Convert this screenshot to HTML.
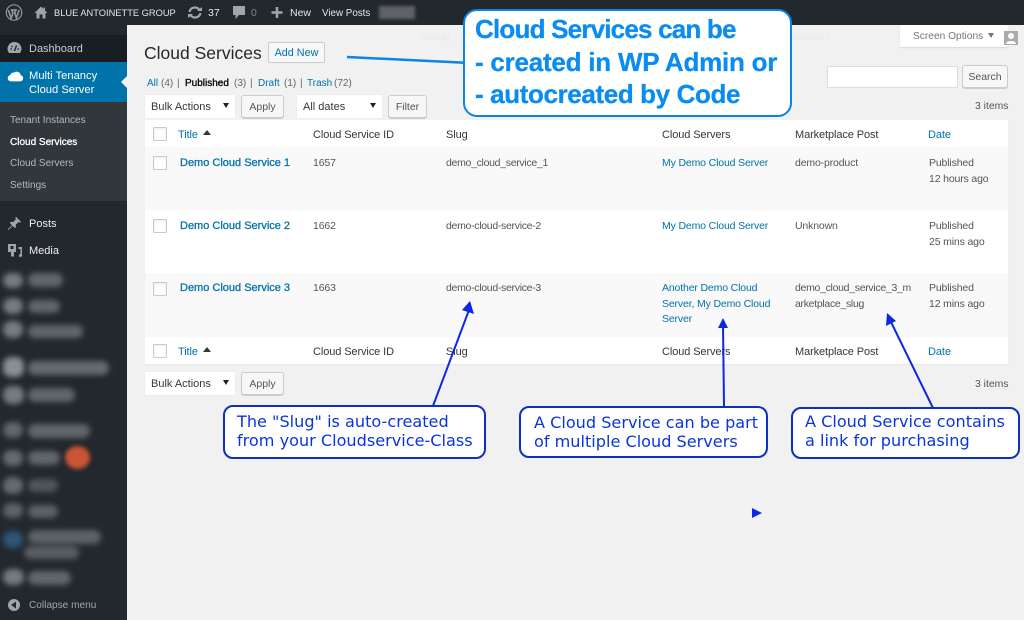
<!DOCTYPE html>
<html><head><meta charset="utf-8">
<style>
html,body{margin:0;padding:0}
body{width:1024px;height:620px;overflow:hidden;position:relative;background:#f1f1f1;font-family:"Liberation Sans",sans-serif;font-size:11.5px;color:#555}
.a,.t{position:absolute}
.t{white-space:nowrap;line-height:16px}
a{color:#0073aa;text-decoration:none}
.m{color:#eee;font-size:11px}
.s{color:#b4b9be;font-size:10px}
.btn{position:absolute;box-sizing:border-box;background:#f7f7f7;border:1px solid #ccc;border-radius:3px;box-shadow:0 1px 0 #ccc;color:#555;font-size:10.5px;text-align:center;line-height:23px;height:23px}
.sel{position:absolute;box-sizing:border-box;background:#fff;height:23px;box-shadow:0 0 1px #ddd;color:#32373c;line-height:24px;padding-left:6px;font-size:11px}
.sel:after{content:"";position:absolute;right:6px;top:8px;border:3px solid transparent;border-top:5px solid #222;border-bottom:0}
.cb{position:absolute;box-sizing:border-box;left:153px;width:14px;height:14px;background:#fff;border:1px solid #c8cbce;border-radius:1px;box-shadow:inset 0 1px 2px rgba(0,0,0,.08)}
.row{position:absolute;left:145px;width:863px}
.h{font-size:11px;color:#32373c;letter-spacing:-.1px}
.h a{color:#0073aa}
.ti{font-size:11px;color:#0073aa;-webkit-text-stroke:.3px #0073aa}
.c{font-size:10.5px;letter-spacing:-.15px}
.g{letter-spacing:-.3px}
.d{line-height:15.5px!important;margin-top:1px}
.co{position:absolute;box-sizing:border-box;background:#fff;border:2px solid #0f2fc0;border-radius:10px;font-family:"DejaVu Sans",sans-serif;font-size:16.1px;line-height:19px;color:#0a34e0;white-space:nowrap}
.bl{position:absolute;background:#767b80;border-radius:8px;filter:blur(3px)}
</style></head><body>

<!-- admin bar -->
<div class="a" style="left:0;top:0;width:1024px;height:25px;background:#23282d"></div>
<svg class="a" style="left:5px;top:3px" width="18" height="19" viewBox="0 0 18 18"><circle cx="9" cy="9" r="7.7" fill="none" stroke="#8f9499" stroke-width="1.2"/><path d="M3.2 6.5l3 8 1.7-5-1.2-3h4.2l-1.2 3 1.7 5 2.7-8" fill="none" stroke="#8f9499" stroke-width="1.7"/></svg>
<svg class="a" style="left:34px;top:5px" width="14" height="15" viewBox="0 0 14 14"><path d="M7 1L0.5 7.5H2.5V13H5.5V9H8.500V13H11.500V7.500H13.500L11 5V2H9.500V3.500Z" fill="#9aa6aa"/></svg>
<div class="t" style="left:54px;top:5px;color:#e4e6e7;font-size:9.3px">BLUE ANTOINETTE GROUP</div>
<svg class="a" style="left:187px;top:5px" width="16" height="15" viewBox="0 0 16 14"><path d="M2.5 6.5A5.5 5.5 0 0 1 12.500 4.500M13.500 7.500A5.500 5.500 0 0 1 3.500 9.500" fill="none" stroke="#a0a5aa" stroke-width="2.2"/><path d="M10 5.500h5v-4zM6 8.500H1v4z" fill="#a0a5aa"/></svg>
<div class="t" style="left:208px;top:5px;color:#e4e6e7;font-size:10.5px">37</div>
<svg class="a" style="left:232px;top:5px" width="14" height="15" viewBox="0 0 14 15"><path d="M1 1H13V10H7L3.500 14V10H1Z" fill="#a0a5aa"/></svg>
<div class="t" style="left:251px;top:5px;color:#82878c;font-size:10.5px">0</div>
<svg class="a" style="left:271px;top:6px" width="12" height="13" viewBox="0 0 12 12"><path d="M6 .5V11.500M.5 6H11.500" stroke="#a0a5aa" stroke-width="2.600"/></svg>
<div class="t" style="left:290px;top:5px;color:#e4e6e7;font-size:10.5px">New</div>
<div class="t" style="left:322px;top:6px;color:#e4e6e7;font-size:9.8px">View Posts</div>
<div class="a" style="left:379px;top:6px;width:36px;height:13px;background:#5f6367;filter:blur(1.500px)"></div>

<!-- sidebar -->
<div class="a" style="left:0;top:25px;width:127px;height:595px;background:#23282d"></div>
<div class="a" style="left:0;top:35px;width:127px;height:27px;background:#191e23"></div>
<div class="a" style="left:0;top:62px;width:127px;height:40px;background:#0073aa"></div>
<div class="a" style="left:0;top:102px;width:127px;height:99px;background:#32373c"></div>
<div class="a" style="left:121px;top:76px;border:6px solid transparent;border-right-color:#f1f1f1;border-left:0;width:0;height:0"></div>
<svg class="a" style="left:7px;top:41px" width="15" height="14" viewBox="0 0 15 14"><path d="M7.500 1A6.800 6.800 0 0 0 2 12H13A6.800 6.800 0 0 0 7.500 1Z" fill="#a0a5aa"/><path d="M7.500 10L9.500 4.500M3.500 8H5M10.500 8H12M4.500 5L5.500 6" stroke="#191e23" stroke-width="1.300"/></svg>
<div class="t m" style="left:29px;top:41px;color:#c8ccd0">Dashboard</div>
<svg class="a" style="left:7px;top:69px" width="17" height="13" viewBox="0 0 16 12"><path d="M3.500 11.500A3 3 0 0 1 3 5.600 3.200 3.200 0 0 1 6.500 3.300 4 4 0 0 1 13 5.800 2.900 2.900 0 0 1 12.500 11.500Z" fill="#fff"/></svg>
<div class="t m" style="left:29px;top:69px;color:#fff;line-height:14px;font-size:11.2px">Multi Tenancy<br>Cloud Server</div>
<div class="t s" style="left:10px;top:113px">Tenant Instances</div>
<div class="t s" style="left:10px;top:135px;color:#fff;-webkit-text-stroke:.3px #fff">Cloud Services</div>
<div class="t s" style="left:10px;top:156px">Cloud Servers</div>
<div class="t s" style="left:10px;top:178px">Settings</div>
<svg class="a" style="left:7px;top:216px" width="15" height="15" viewBox="0 0 15 15"><path d="M9 .8L14.200 6 12.800 6.600 11.500 6 8.800 8.700 9 11 7.800 12 5.500 9.700 1.500 14 .8 13.300 5 9.200 2.800 7 3.800 5.800 6.200 6 8.800 3.400 8.300 2.200Z" fill="#a0a5aa"/></svg>
<div class="t m" style="left:29px;top:216px">Posts</div>
<svg class="a" style="left:7px;top:243px" width="16" height="15" viewBox="0 0 16 15"><path d="M1 1H9V9H7V13.500H4V9H1Z" fill="#a0a5aa"/><rect x="3.500" y="3" width="3" height="3" fill="#23282d"/><path d="M11.500 4H15V12.500A1.500 1.500 0 1 1 13.500 11V6H11.500Z" fill="#a0a5aa"/></svg>
<div class="t m" style="left:29px;top:243px">Media</div>

<!-- blurred menu -->
<div class="bl" style="left:3px;top:273px;width:20px;height:15px"></div><div class="bl" style="left:28px;top:273px;width:35px;height:14px;opacity:.75"></div>
<div class="bl" style="left:3px;top:298px;width:20px;height:16px"></div><div class="bl" style="left:28px;top:300px;width:32px;height:13px;opacity:.75"></div>
<div class="bl" style="left:3px;top:321px;width:20px;height:17px"></div><div class="bl" style="left:28px;top:325px;width:55px;height:13px;opacity:.75"></div>
<div class="bl" style="left:3px;top:357px;width:21px;height:20px;background:#8a8f93"></div><div class="bl" style="left:28px;top:361px;width:81px;height:14px;opacity:.8"></div>
<div class="bl" style="left:3px;top:386px;width:21px;height:18px"></div><div class="bl" style="left:28px;top:388px;width:47px;height:14px;opacity:.75"></div>
<div class="bl" style="left:3px;top:422px;width:20px;height:16px;opacity:.75"></div><div class="bl" style="left:28px;top:424px;width:62px;height:14px;opacity:.75"></div>
<div class="bl" style="left:3px;top:450px;width:20px;height:16px;opacity:.8"></div><div class="bl" style="left:28px;top:451px;width:32px;height:14px;opacity:.75"></div>
<div class="a" style="left:65px;top:446px;width:25px;height:23px;border-radius:50%;background:#ca5535;filter:blur(2px)"></div>
<div class="bl" style="left:3px;top:477px;width:20px;height:17px;opacity:.8"></div><div class="bl" style="left:28px;top:479px;width:30px;height:13px;opacity:.55"></div>
<div class="bl" style="left:3px;top:503px;width:20px;height:15px;opacity:.7"></div><div class="bl" style="left:28px;top:505px;width:30px;height:13px;opacity:.7"></div>
<div class="bl" style="left:3px;top:531px;width:20px;height:17px;background:#2d5578"></div><div class="bl" style="left:28px;top:530px;width:73px;height:14px;opacity:.7"></div><div class="bl" style="left:24px;top:546px;width:55px;height:13px;opacity:.65"></div>
<div class="bl" style="left:3px;top:569px;width:21px;height:16px"></div><div class="bl" style="left:28px;top:571px;width:43px;height:14px;opacity:.75"></div>
<svg class="a" style="left:7px;top:598px" width="15" height="15" viewBox="0 0 15 15"><circle cx="7" cy="7" r="6" fill="#a0a5aa"/><path d="M9 3.500V10.500L4 7Z" fill="#23282d"/></svg>
<div class="t s" style="left:29px;top:598px;font-size:10.1px;color:#a0a5aa">Collapse menu</div>

<!-- header -->
<div class="t" style="left:144px;top:42px;font-size:17.5px;line-height:22px;color:#23282d">Cloud Services</div>
<div class="a" style="left:268px;top:42px;width:57px;height:21px;box-sizing:border-box;border:1px solid #ccc;background:#f7f7f7;border-radius:2px;color:#0073aa;font-size:10.8px;line-height:20px;text-align:center">Add New</div>

<div class="t" style="left:147px;top:76px;font-size:10px;color:#0073aa">All</div>
<div class="t" style="left:161px;top:76px;font-size:10px;color:#666">(4)</div>
<div class="t" style="left:177px;top:76px;font-size:10px;color:#666">|</div>
<div class="t" style="left:185px;top:76px;font-size:10px;color:#000;-webkit-text-stroke:.3px #000">Published</div>
<div class="t" style="left:234px;top:76px;font-size:10px;color:#666">(3)</div>
<div class="t" style="left:250px;top:76px;font-size:10px;color:#666">|</div>
<div class="t" style="left:258px;top:76px;font-size:10px;color:#0073aa">Draft</div>
<div class="t" style="left:284px;top:76px;font-size:10px;color:#666">(1)</div>
<div class="t" style="left:300px;top:76px;font-size:10px;color:#666">|</div>
<div class="t" style="left:307px;top:76px;font-size:10px;color:#0073aa">Trash</div>
<div class="t" style="left:334px;top:76px;font-size:10px;color:#666">(72)</div>

<div class="sel" style="left:145px;top:95px;width:90px">Bulk Actions</div>
<div class="btn" style="left:241px;top:95px;width:43px">Apply</div>
<div class="sel" style="left:297px;top:95px;width:85px">All dates</div>
<div class="btn" style="left:388px;top:95px;width:39px">Filter</div>

<div class="t" style="left:420px;top:30px;font-size:10px;color:#eaeaea">Debug</div>
<div class="t" style="left:740px;top:30px;font-size:10px;color:#eaeaea">Tenant Administrator</div>
<div class="a" style="left:900px;top:25px;width:108px;height:22px;background:#fff;box-shadow:0 1px 1px rgba(0,0,0,.1)"></div>
<div class="t" style="left:913px;top:29px;font-size:10.2px;color:#72777c">Screen Options</div>
<div class="a" style="left:988px;top:33px;border:3.5px solid transparent;border-top:5px solid #72777c;border-bottom:0;width:0;height:0"></div>
<svg class="a" style="left:1004px;top:31px" width="14" height="14" viewBox="0 0 14 14"><rect width="14" height="14" fill="#a9acaf"/><circle cx="7" cy="5" r="3" fill="#fff"/><path d="M2 13C2 9 12 9 12 13Z" fill="#fff"/></svg>

<div class="a" style="left:827px;top:66px;width:131px;height:22px;box-sizing:border-box;background:#fff;border:1px solid #ddd"></div>
<div class="btn" style="left:962px;top:65px;width:46px">Search</div>
<div class="t" style="left:975px;top:99px;font-size:10.4px;color:#555">3 items</div>

<!-- table -->
<div class="row" style="top:120px;height:244px;background:#fff;box-shadow:0 1px 1px rgba(0,0,0,.04)"></div>
<div class="row" style="top:147px;height:63px;background:#f9f9f9"></div>
<div class="row" style="top:273px;height:64px;background:#f9f9f9"></div>

<div class="cb" style="top:127px"></div>
<div class="t h" style="left:178px;top:127px"><a>Title</a></div>
<div class="a" style="left:203px;top:130px;border:4px solid transparent;border-bottom:5px solid #32373c;border-top:0;width:0;height:0"></div>
<div class="t h" style="left:313px;top:127px">Cloud Service ID</div>
<div class="t h" style="left:446px;top:127px">Slug</div>
<div class="t h" style="left:662px;top:127px">Cloud Servers</div>
<div class="t h" style="left:795px;top:127px">Marketplace Post</div>
<div class="t h" style="left:928px;top:127px"><a>Date</a></div>

<div class="cb" style="top:156px"></div>
<div class="t ti" style="left:180px;top:155px">Demo Cloud Service 1</div>
<div class="t c" style="left:313px;top:155px">1657</div>
<div class="t c g" style="left:446px;top:155px">demo_cloud_service_1</div>
<div class="t c" style="left:662px;top:155px"><a>My Demo Cloud Server</a></div>
<div class="t c" style="left:795px;top:155px">demo-product</div>
<div class="t c d" style="left:929px;top:155px">Published<br>12 hours ago</div>

<div class="cb" style="top:219px"></div>
<div class="t ti" style="left:180px;top:218px">Demo Cloud Service 2</div>
<div class="t c" style="left:313px;top:218px">1662</div>
<div class="t c g" style="left:446px;top:218px">demo-cloud-service-2</div>
<div class="t c" style="left:662px;top:218px"><a>My Demo Cloud Server</a></div>
<div class="t c" style="left:795px;top:218px">Unknown</div>
<div class="t c d" style="left:929px;top:218px">Published<br>25 mins ago</div>

<div class="cb" style="top:282px"></div>
<div class="t ti" style="left:180px;top:280px">Demo Cloud Service 3</div>
<div class="t c" style="left:313px;top:280px">1663</div>
<div class="t c g" style="left:446px;top:280px">demo-cloud-service-3</div>
<div class="t c d" style="left:662px;top:280px"><a>Another Demo Cloud<br>Server, My Demo Cloud<br>Server</a></div>
<div class="t c g d" style="left:795px;top:280px">demo_cloud_service_3_m<br>arketplace_slug</div>
<div class="t c d" style="left:929px;top:280px">Published<br>12 mins ago</div>

<div class="cb" style="top:344px"></div>
<div class="t h" style="left:178px;top:344px"><a>Title</a></div>
<div class="a" style="left:203px;top:347px;border:4px solid transparent;border-bottom:5px solid #32373c;border-top:0;width:0;height:0"></div>
<div class="t h" style="left:313px;top:344px">Cloud Service ID</div>
<div class="t h" style="left:446px;top:344px">Slug</div>
<div class="t h" style="left:662px;top:344px">Cloud Servers</div>
<div class="t h" style="left:795px;top:344px">Marketplace Post</div>
<div class="t h" style="left:928px;top:344px"><a>Date</a></div>

<div class="sel" style="left:145px;top:372px;width:90px">Bulk Actions</div>
<div class="btn" style="left:241px;top:372px;width:43px">Apply</div>
<div class="t" style="left:975px;top:377px;font-size:10.4px;color:#555">3 items</div>

<!-- arrows -->
<svg class="a" style="left:0;top:0" width="1024" height="620">
<path d="M347 57L470 63" stroke="#0a84e6" stroke-width="2.5" fill="none"/>
<g stroke="#0a28e6" stroke-width="2" fill="none"><path d="M433 406L469 310"/><path d="M724 406L723 324"/><path d="M933 408L890 320"/></g>
<g fill="#0a28e6"><path d="M470 301L474 314 462 310Z"/><path d="M723 318L728 328 718 328Z"/><path d="M887 313L896 321 886 326Z"/><path d="M752 508L762 513 752 518Z"/></g>
</svg>

<!-- callouts -->
<div class="a" style="left:463px;top:9px;width:329px;height:108px;box-sizing:border-box;background:#fff;border:2px solid #0a84e6;border-radius:14px"></div>
<div class="t" style="left:475px;top:13px;font-size:26px;line-height:32.5px;font-weight:bold;color:#0a8cf0;-webkit-text-stroke:.3px #0a8cf0"><span style="letter-spacing:-.8px">Cloud Services can be</span><br><span style="letter-spacing:-.23px">- created in WP Admin or</span><br><span style="letter-spacing:-.38px">- autocreated by Code</span></div>

<div class="co" style="left:223px;top:405px;width:263px;height:54px;padding:5px 0 0 12px">The "Slug" is auto-created<br>from your Cloudservice-Class</div>
<div class="co" style="left:519px;top:406px;width:249px;height:52px;padding:5px 0 0 13px">A Cloud Service can be part<br>of multiple Cloud Servers</div>
<div class="co" style="left:791px;top:407px;width:229px;height:52px;padding:3px 0 0 12px">A Cloud Service contains<br>a link for purchasing</div>

</body></html>
